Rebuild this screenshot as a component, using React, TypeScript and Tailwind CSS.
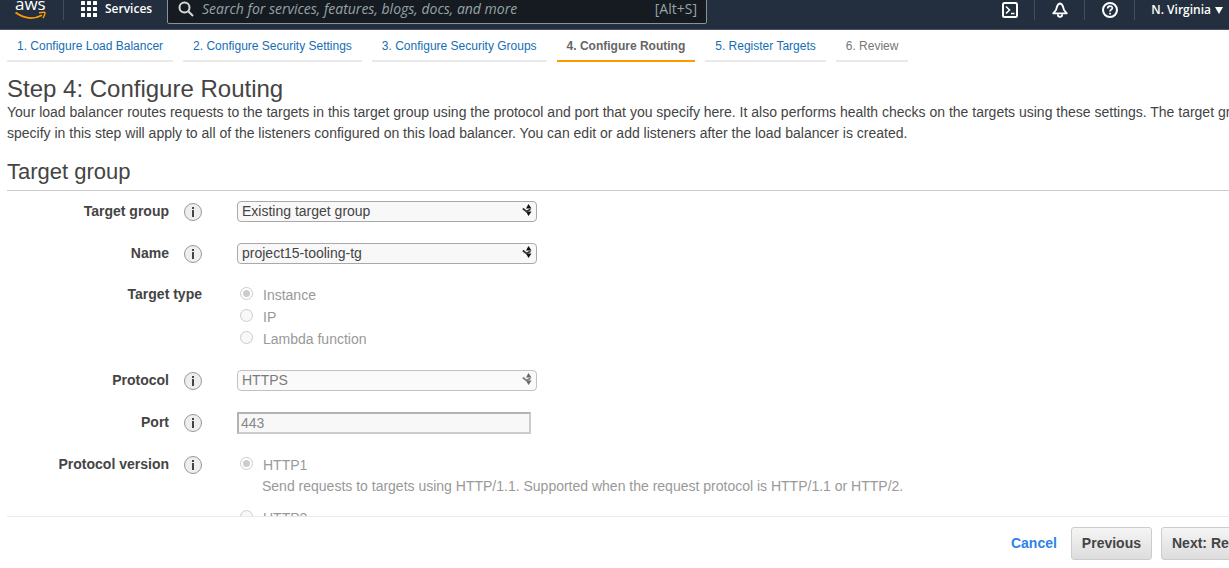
import { useId, type ReactNode } from "react";

const fieldBorder = "border border-[#a9a9a9]";

function Apps() {
  return (
    <svg viewBox="0 0 16 16" className="size-4 fill-white" aria-hidden="true">
      {[0, 6, 12].map((y) => [0, 6, 12].map((x) => <rect key={`${x}-${y}`} x={x} y={y} width="4" height="4" rx="0.5" />))}
    </svg>
  );
}

function Sorter({ dim }: { dim?: boolean }) {
  return (
    <svg
      viewBox="0 0 10 12"
      className={`pointer-events-none absolute top-[3px] right-[5px] h-3 w-[10px] ${dim ? "opacity-90" : ""}`}
      aria-hidden="true"
    >
      <path d="M6.5 0 9.5 4.5H4zM4 7.500H9.5L6.5 12z" fill="#111" />
      <path d="M0.800 4.500 4.500 7.500 8.500 5.200" fill="none" stroke="#333" strokeWidth="1.800" />
    </svg>
  );
}

function Info({ about }: { about: string }) {
  return (
    <button
      type="button"
      aria-label={`About ${about}`}
      className="mt-[2px] flex size-[18px] shrink-0 items-center justify-center rounded-full border border-[#999] bg-[#eee]"
    >
      <svg viewBox="0 0 4 10" className="h-[10px] w-1 fill-[#444]" aria-hidden="true">
        <path d="M1 0h2v2H1zM1 3h2v7H1z" />
      </svg>
    </button>
  );
}

function Row({ label, id, info, children, className }: {
  label: string;
  id: string;
  info?: boolean;
  children: ReactNode;
  className: string;
}) {
  return (
    <div className={`flex ${className}`}>
      <div className="flex w-[195px] shrink-0 justify-end gap-[15px]">
        <label id={`${id}-label`} htmlFor={id} className="font-bold">{label}</label>
        {info && <Info about={label} />}
      </div>
      <div className="ml-[35px] min-w-0">{children}</div>
    </div>
  );
}

function Select({ id, value, disabled }: { id: string; value: string; disabled?: boolean }) {
  return (
    <div className={`relative w-[300px] ${disabled ? "opacity-70" : ""}`}>
      <select
        id={id}
        disabled={disabled}
        defaultValue={value}
        className={`block h-[21px] w-full appearance-none rounded-[4px] bg-[#f8f8f8] pl-1 leading-[19px] ${fieldBorder}`}
      >
        <option>{value}</option>
      </select>
      <Sorter dim={disabled} />
    </div>
  );
}

function Radio({ name, label, checked }: { name: string; label: string; checked?: boolean }) {
  const id = useId();
  return (
    <div className="flex h-[22px] gap-[10px] pl-[3px] text-[#999]">
      <input
        id={id}
        type="radio"
        name={name}
        defaultChecked={checked}
        disabled
        className="mt-[3px] size-[13px] shrink-0 appearance-none rounded-full border border-[#ccc] bg-[#f8f8f8] p-[2px] checked:bg-[#ccc] checked:bg-clip-content"
      />
      <label htmlFor={id} className="leading-[22px]">{label}</label>
    </div>
  );
}

const steps = ["1. Configure Load Balancer", "2. Configure Security Settings", "3. Configure Security Groups", "4. Configure Routing", "5. Register Targets", "6. Review"];

function stepColor(i: number) {
  if (i === 3) return "border-[#ff9900] font-bold text-[#666]";
  if (i === 5) return "border-[#eaeaea] text-[#777]";
  return "border-[#eaeaea] text-[#146eb4]";
}

const divider = "h-5 w-px shrink-0 bg-[#414d5c]";
const iconButton = "flex w-[49px] shrink-0 items-center justify-center";

export default function App() {
  return (
    <div className="flex h-screen flex-col overflow-hidden bg-white font-['Liberation_Sans',Arial,sans-serif] text-sm leading-[21px] text-[#444]">
      <header className="flex h-[30px] shrink-0 items-start overflow-hidden border-b border-[#4b5366] bg-[#232f3e] font-['Open_Sans','Noto_Sans',sans-serif] text-white">
        <a href="#home" aria-label="AWS home" className="ml-[15px] flex w-12 shrink-0 flex-col">
          <span className="-mt-[5px] h-4 text-[17px] leading-[17px] font-medium">aws</span>
          <svg viewBox="0 0 31 9" className="h-[9px] w-[31px]" aria-hidden="true">
            <path d="M0.500 1.500Q14 11 27 4.200" fill="none" stroke="#f90" strokeWidth="1.800" />
            <path d="M24 1.800Q30 0.500 30 1.800Q30 4 28 7" fill="none" stroke="#f90" strokeWidth="1.500" />
          </svg>
        </a>
        <div className={divider} />
        <button type="button" className="mt-px ml-[17px] flex w-[86px] shrink-0 items-center gap-2 text-[12px] leading-4 font-semibold">
          <Apps />
          Services
        </button>
        <form role="search" className="-mt-2 flex h-8 w-[540px] shrink-0 items-end rounded-[2px] border border-[#879596] bg-[#161a21] pr-[9px] pb-[5px] pl-[10px] text-[#95a5a6]">
          <svg viewBox="0 0 16 16" className="mb-px size-4 shrink-0 fill-none stroke-[#d5dbdb] stroke-2" aria-hidden="true">
            <circle cx="6.500" cy="6.500" r="5" />
            <path d="m10.500 10.500 4.500 4.500" />
          </svg>
          <input
            type="search"
            aria-label="Search for services"
            placeholder="Search for services, features, blogs, docs, and more"
            className="ml-2 h-[18px] min-w-0 flex-1 bg-transparent text-sm italic outline-none placeholder:text-[#95a5a6]"
          />
          <kbd className="font-['Open_Sans',sans-serif] text-sm leading-[18px]">[Alt+S]</kbd>
        </form>
        <div className="ml-auto flex shrink-0">
          <button type="button" aria-label="CloudShell" className={iconButton}>
            <svg viewBox="0 0 16 16" className="size-4 fill-none stroke-white stroke-2" aria-hidden="true">
              <rect x="1" y="1" width="14" height="14" rx="1.500" />
              <path d="m4 4.500 3.500 3.500L4 11.500M9 11.500h3.500" strokeWidth="1.600" />
            </svg>
          </button>
          <div className={divider} />
          <button type="button" aria-label="Notifications" className={iconButton}>
            <svg viewBox="0 0 16 16" className="size-4 fill-none stroke-white stroke-2" aria-hidden="true">
              <path d="M8 1.500C4.800 2 4.800 6 4 8L1.200 11.300H14.800L12 8C11.200 6 11.200 2 8 1.500Z" strokeLinejoin="round" strokeWidth="1.800" />
              <path d="M5.800 12.200a2.200 2.600 0 0 0 4.400 0" strokeWidth="1.800" />
            </svg>
          </button>
          <div className={divider} />
          <button type="button" aria-label="Help" className={iconButton}>
            <svg viewBox="0 0 16 16" className="size-4 fill-none stroke-white stroke-2" aria-hidden="true">
              <circle cx="8" cy="8" r="7" />
              <path d="M5.700 6.500C5.700 3.300 10.500 3.500 10.300 6.200C10.200 7.500 8 7.500 8 9.500M8 10.700v1.700" strokeWidth="1.700" />
            </svg>
          </button>
          <div className={divider} />
          <button type="button" className="ml-4 flex items-center gap-1 pr-[6px] text-[12px] leading-4 font-semibold">
            N. Virginia
            <svg viewBox="0 0 8 7" className="h-[7px] w-2 fill-white" aria-hidden="true"><path d="M0 0h8L4 7z" /></svg>
          </button>
        </div>
      </header>

      <nav aria-label="Steps" className="flex shrink-0 gap-[10px] pt-1 pl-[7px] text-xs">
        {steps.map((step, i) => (
          <a key={step} href={`#step-${i + 1}`} className={`h-7 border-b-2 px-[10px] leading-6 whitespace-nowrap ${stepColor(i)}`}>
            {step}
          </a>
        ))}
      </nav>

      <main className="ml-[7px] min-h-0 flex-1 overflow-hidden border-b border-[#eaeaea] pt-[14px]">
        <h1 className="text-2xl leading-[26px]">Step 4: Configure Routing</h1>
        <p className="whitespace-nowrap">
          Your load balancer routes requests to the targets in this target group using the protocol and port that you specify here. It also performs health checks on the targets using these settings. The target group you
          <br />
          specify in this step will apply to all of the listeners configured on this load balancer. You can edit or add listeners after the load balancer is created.
        </p>
        <h2 className="mt-[14px] border-b border-[#ccc] pb-[5px] text-[22px] leading-[27px]">Target group</h2>
        <form className="pt-[10px]">
          <Row label="Target group" id="group" info className="h-[42px]">
            <Select id="group" value="Existing target group" />
          </Row>
          <Row label="Name" id="name" info className="h-[41px]">
            <Select id="name" value="project15-tooling-tg" />
          </Row>
          <Row label="Target type" id="type" className="h-[86px]">
            <div role="radiogroup" aria-labelledby="type-label">
              <Radio name="type" label="Instance" checked />
              <Radio name="type" label="IP" />
              <Radio name="type" label="Lambda function" />
            </div>
          </Row>
          <Row label="Protocol" id="protocol" info className="h-[42px]">
            <Select id="protocol" value="HTTPS" disabled />
          </Row>
          <Row label="Port" id="port" info className="h-[42px]">
            <input
              id="port"
              defaultValue="443"
              disabled
              className="block h-[22px] w-[294px] border-2 border-[#ccc] border-t-[#b3b3b3] border-l-[#b3b3b3] bg-[#f8f8f8] px-[2px] text-[#888]"
            />
          </Row>
          <Row label="Protocol version" id="version" info className="h-[100px]">
            <div role="radiogroup" aria-labelledby="version-label">
              <Radio name="version" label="HTTP1" checked />
              <p className="mb-[10px] pl-[25px] text-[#999]">
                Send requests to targets using HTTP/1.1. Supported when the request protocol is HTTP/1.1 or HTTP/2.
              </p>
              <Radio name="version" label="HTTP2" />
            </div>
          </Row>
        </form>
      </main>

      <footer className="flex h-[51px] shrink-0 justify-end overflow-hidden pt-[10px] font-bold">
        <a href="#cancel" className="mr-[14px] leading-8 text-[#2e83e6]">Cancel</a>
        <button type="button" className="mr-[9px] h-[33px] rounded-[3px] border border-[#ccc] bg-linear-to-b from-[#f5f5f5] to-[#ddd] px-[10px]">
          Previous
        </button>
        <div className="flex w-[68px] overflow-hidden">
          <button type="button" className="h-[33px] shrink-0 rounded-[3px] border border-[#ccc] bg-linear-to-b from-[#f5f5f5] to-[#ddd] px-[10px] whitespace-nowrap">
            Next: Register Targets
          </button>
        </div>
      </footer>
    </div>
  );
}
